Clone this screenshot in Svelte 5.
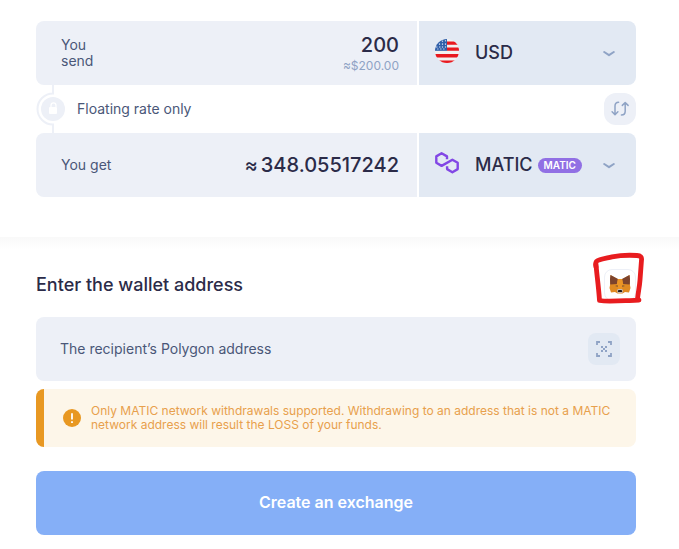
<script lang="ts">
  let amount = $state('200');
  let address = $state('');
  let from = $state('USD');
  let to = $state('MATIC');

  const fiat = ['USD', 'EUR', 'GBP'];
  const coins = ['MATIC', 'BTC', 'ETH'];
</script>

{#snippet chevron()}
  <svg class="chevron" width="12" height="8" viewBox="0 0 12 8" aria-hidden="true">
    <path d="M1.2 2 L6 5.2 L10.8 2" fill="none" stroke="currentColor" stroke-width="2" stroke-linecap="round" stroke-linejoin="round" />
  </svg>
{/snippet}

<main class="page">
  <section class="calculator">
    <div class="row">
      <div class="amount">
        <label class="amount-label" for="send">You send</label>
        <div class="amount-value">
          <input id="send" class="value" type="text" inputmode="decimal" bind:value={amount} />
          <span class="hint">≈$200.00</span>
        </div>
      </div>
      <div class="currency">
        <svg class="coin" width="24" height="24" viewBox="0 0 24 24" aria-hidden="true">
          <defs>
            <clipPath id="flag"><circle cx="12" cy="12" r="12" /></clipPath>
          </defs>
          <g clip-path="url(#flag)">
            <rect width="24" height="24" fill="#f2f1f0" />
            <path d="M12 2.5h12v3.3H12zM12 8.6h12v3.2H12zM0 15h24v3.6H0zM0 21.6h24V24H0z" fill="#e8191f" />
            <rect width="12" height="11.8" fill="#2f5fa9" />
            <path d="M7.5 1.5v1.6M10.5 1v1.6M4.5 4.3v1.6M7.5 4.3v1.6M10.5 4.3v1.6M1.8 7.2v1.6M4.8 7.2v1.6M7.5 7.2v1.6M10.5 7.2v1.6M2 10h1.6M5 10h1.6M8 10h1.6" stroke="#b4c7e4" stroke-width="1.2" />
          </g>
        </svg>
        <select class="ticker" aria-label="Currency to send" bind:value={from}>
          {#each fiat as item}
            <option>{item}</option>
          {/each}
        </select>
        {@render chevron()}
      </div>
    </div>

    <div class="rate">
      <svg class="rate-lock" width="30" height="48" viewBox="0 0 30 48" aria-hidden="true">
        <path d="M17 0V8.5A15.5 15.5 0 0 0 17 39.5V48" fill="none" stroke="#edf0f7" stroke-width="2" />
        <circle cx="17" cy="24" r="12" fill="#edf0f7" />
        <path d="M15 22V20.4a2.5 2.5 0 0 1 5 0V22" fill="none" stroke="#fff" stroke-width="1.2" />
        <rect x="13" y="22" width="8" height="7" rx="1" fill="#fff" />
      </svg>
      <span class="rate-text">Floating rate only</span>
      <button class="icon-btn swap" type="button" aria-label="Swap currencies">
        <svg width="20" height="16" viewBox="0 0 20 16" fill="none" stroke="#8fa3c5" stroke-width="1.5" stroke-linecap="round" stroke-linejoin="round" aria-hidden="true">
          <path d="M8.6 1.2C6.2 1.2 5 2.6 5 5v8.6M2.1 10.8l2.9 2.9 2.9-2.9" />
          <path d="M11.4 14C13.9 14 15.2 12.6 15.2 10.2V1.6M12.3 4.4l2.9-2.9 2.9 2.9" />
        </svg>
      </button>
    </div>

    <div class="row">
      <div class="amount">
        <label class="amount-label wide" for="get">You get</label>
        <output id="get" class="value estimate"><span>≈</span>348.05517242</output>
      </div>
      <div class="currency">
        <svg class="coin" width="24" height="24" viewBox="0 0 24 24" fill="none" stroke="#8247e5" stroke-width="2.4" stroke-linejoin="round" aria-hidden="true">
          <path d="M12 8.2V5.4L6.6 2.3 1.3 5.4v6.4l5.3 3.1L17.4 8.7l5.3 3.1v6.3l-5.3 3.1-5.3-3.1v-2.8" />
        </svg>
        <select class="ticker" aria-label="Currency to get" bind:value={to}>
          {#each coins as item}
            <option>{item}</option>
          {/each}
        </select>
        <span class="network">MATIC</span>
        {@render chevron()}
      </div>
    </div>
  </section>

  <section class="wallet">
    <div class="wallet-head">
      <h2>Enter the wallet address</h2>
      <div class="metamask">
        <button class="icon-btn outlined" type="button" aria-label="Connect MetaMask">
          <svg width="22" height="20" viewBox="0 0 22 20" aria-hidden="true">
            <path d="M1.5 0 8.500 4h5l7-4 .3 9 .7 4-1.500 4.500-4-.5-2.500 1.500h-5L6 17l-4 .5L.5 13l.7-4z" fill="#e08a22" />
            <path d="M1.500 0 9 4l-1 5-6.800.5L1 4zM20.500 0 13 4l1 5 6.800.5L21 4z" fill="#7d432c" />
            <path d="M8.800 4h4.400l1 5.500L12.800 14H9.200l-1.400-4.500z" fill="#ec9526" />
            <path d="M6 11l2.500-1 .5 2zM16 11l-2.500-1-.5 2z" fill="#8a5a2e" />
            <path d="M8 15l1.200-1h3.600l1.200 1-.5 3h-5z" fill="#c9b9b0" />
            <path d="M9.300 15h3.400l.5 2H8.800z" fill="#24201f" />
          </svg>
        </button>
        <svg class="marker" width="56" height="56" viewBox="0 0 56 56" fill="none" stroke="#e81c1f" stroke-width="4.8" stroke-linecap="round" stroke-linejoin="round" aria-hidden="true">
          <path d="M4 15C3 11 3.500 9 7 8c4-1.500 8-2 13-3.200C27 3.500 37 3 45 3.500c3.500.2 5 1.500 4.500 4.500C49 15 48.500 22 48 28c-.5 7-2 13-2.500 19" />
          <path d="M4 12c.5 9 2.500 21 3.500 36.500 8 1.200 18 .2 26 .2 5 0 9-.4 13.500-.6" />
        </svg>
      </div>
    </div>

    <div class="address">
      <input type="text" aria-label="Wallet address" placeholder="The recipient’s Polygon address" bind:value={address} />
      <button class="icon-btn scan" type="button" aria-label="Scan QR code">
        <svg width="16" height="16" viewBox="0 0 16 16" aria-hidden="true">
          <path d="M1 4V1h3M12 1h3v3M15 12v3h-3M4 15H1v-3" fill="none" stroke="#8fa3c5" stroke-width="1.8" />
          <path d="M5 5h2v2H5zM9 5h2v2H9zM7 7h2v2H7zM5 9h2v2H5zM9 9h2v2H9z" fill="#8fa3c5" />
        </svg>
      </button>
    </div>

    <div class="warning" role="alert">
      <svg width="18" height="18" viewBox="0 0 18 18" aria-hidden="true">
        <circle cx="9" cy="9" r="9" fill="#e89822" />
        <path d="M9 4.2v6.3M9 12.3v1.8" stroke="#fff" stroke-width="1.8" />
      </svg>
      <p>Only MATIC network withdrawals supported. Withdrawing to an address that is not a MATIC network address will result the LOSS of your funds.</p>
    </div>

    <button class="submit" type="button">Create an exchange</button>
  </section>
</main>

<style>
  :global(body) {
    margin: 0;
    background: #fff;
  }
  .page {
    font-family: Inter, 'Liberation Sans', sans-serif;
    font-size: 14px;
    line-height: 16px;
    color: #4a5778;
  }
  input,
  select,
  button {
    margin: 0;
    padding: 0;
    border: 0;
    font-family: inherit;
  }
  .calculator {
    padding: 21px 43px 40px 36px;
  }
  .row {
    display: grid;
    grid-template-columns: minmax(0, 381fr) minmax(0, 217fr);
    gap: 2px;
    height: 64px;
    border-radius: 8px;
    overflow: hidden;
  }
  .amount {
    display: flex;
    align-items: center;
    justify-content: space-between;
    padding: 0 18px 0 25px;
    background: #edf0f7;
  }
  .amount-label {
    width: 40px;
  }
  .amount-label.wide {
    width: auto;
  }
  .amount-value {
    display: flex;
    flex-direction: column;
    align-items: flex-end;
    padding-top: 2px;
  }
  .value {
    width: 200px;
    font-size: 20px;
    font-weight: 500;
    line-height: 24px;
    text-align: right;
    color: #2b2b48;
    background: transparent;
    outline: none;
  }
  .estimate {
    display: flex;
    justify-content: flex-end;
    gap: 3px;
  }
  .hint {
    font-size: 12px;
    line-height: 18px;
    color: #8fa3c5;
  }
  .currency {
    display: flex;
    align-items: center;
    padding: 0 21px 0 16px;
    background: #e2e9f3;
  }
  .coin {
    flex-shrink: 0;
    margin: 0 16px 4px 0;
  }
  .ticker {
    appearance: none;
    field-sizing: content;
    font-size: 18px;
    font-weight: 500;
    line-height: 24px;
    color: #2b2b48;
    background: transparent;
    outline: none;
  }
  .network {
    margin-left: 5px;
    padding: 0 6px;
    border-radius: 8px;
    font-size: 10px;
    font-weight: 600;
    line-height: 15px;
    color: #fff;
    background: #9170e4;
  }
  .chevron {
    flex-shrink: 0;
    margin: 2px 0 0 auto;
    color: #8fa3c5;
  }
  .rate {
    display: flex;
    align-items: center;
    height: 48px;
  }
  .rate-lock {
    margin-right: 11px;
  }
  .icon-btn {
    display: flex;
    align-items: center;
    justify-content: center;
    width: 32px;
    height: 32px;
    flex-shrink: 0;
    border-radius: 8px;
    background: #edf0f7;
    cursor: pointer;
  }
  .swap {
    margin-left: auto;
    border-radius: 12px;
  }
  .scan {
    background: #e2e9f3;
  }
  .outlined {
    border: 1px solid #edf0f7;
    background: #fff;
  }
  .wallet {
    padding: 32px 43px 14px 36px;
    background: linear-gradient(#f9f9f9, #fff 12px);
  }
  .wallet-head {
    display: flex;
    align-items: center;
    justify-content: space-between;
    margin-bottom: 16px;
  }
  h2 {
    margin: 0;
    font-size: 18px;
    font-weight: 500;
    line-height: 24px;
    color: #2b2b48;
  }
  .metamask {
    position: relative;
  }
  .marker {
    position: absolute;
    top: -17px;
    left: -12px;
    pointer-events: none;
  }
  .address {
    display: flex;
    align-items: center;
    height: 64px;
    margin-bottom: 8px;
    padding: 0 16px 0 24px;
    border-radius: 8px;
    background: #edf0f7;
  }
  .address input {
    flex: 1;
    min-width: 0;
    font-size: 14px;
    line-height: 16px;
    color: #4a5778;
    background: transparent;
    outline: none;
  }
  .address input::placeholder {
    color: #4a5778;
    opacity: 1;
  }
  .warning {
    display: flex;
    align-items: center;
    gap: 10px;
    margin-bottom: 24px;
    padding: 15px 20px 15px 19px;
    border-left: 8px solid #e89822;
    border-radius: 8px;
    background: #fdf6e9;
  }
  .warning svg {
    flex-shrink: 0;
  }
  .warning p {
    margin: 0;
    font-size: 12px;
    line-height: 14px;
    color: #e8a04c;
  }
  .submit {
    display: block;
    width: 100%;
    height: 64px;
    padding-bottom: 2px;
    border-radius: 8px;
    font-size: 16px;
    font-weight: 600;
    color: #fff;
    background: #85aff7;
    cursor: pointer;
  }
</style>
